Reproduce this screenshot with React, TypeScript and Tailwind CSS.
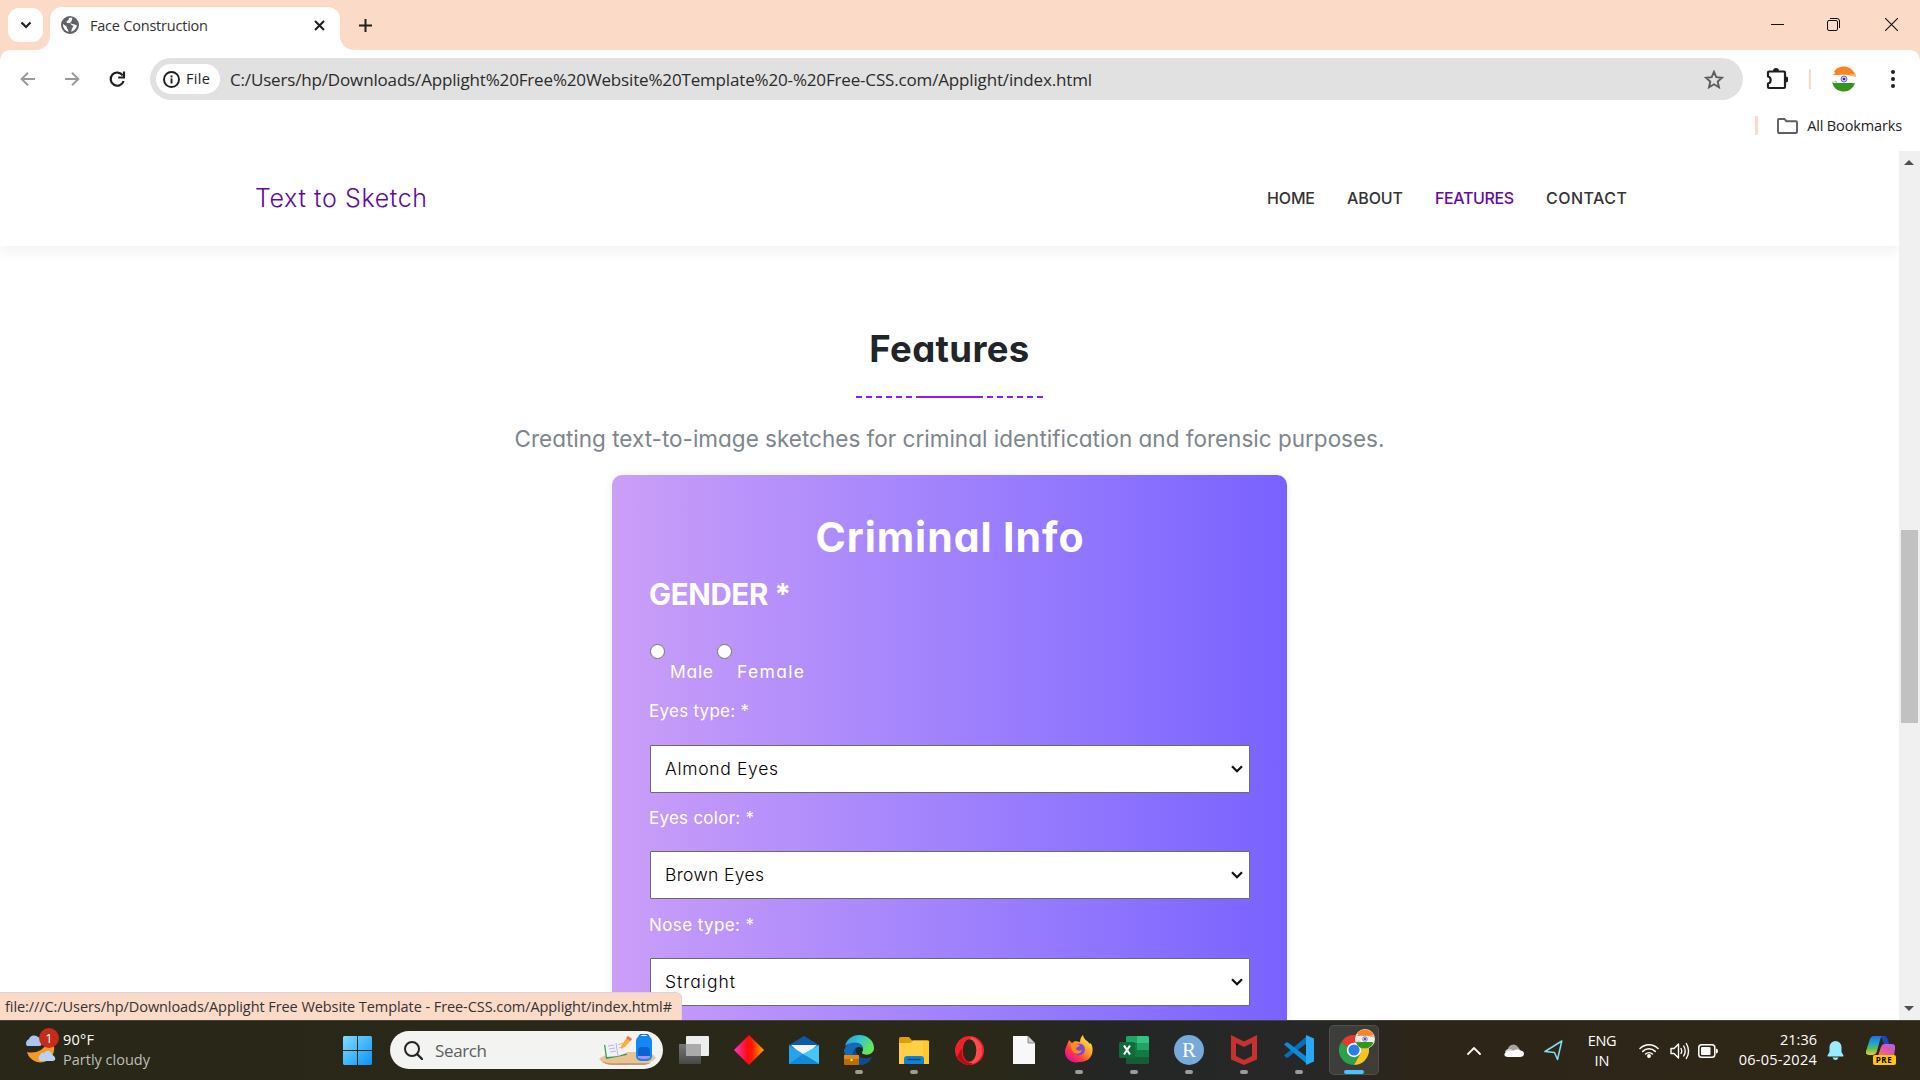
import { useLayoutEffect, useRef, useState } from "react";
import type { ReactNode } from "react";

/* A single line of text whose tracking is adjusted so that it fills a given width. */
function Fit({ w, className = "", children }: { w: number; className?: string; children: string }) {
  const ref = useRef<HTMLSpanElement>(null);
  const [spacing, setSpacing] = useState(0);
  useLayoutEffect(() => {
    if (ref.current) {
      const natural = ref.current.getBoundingClientRect().width;
      setSpacing((w - natural) / Math.max(1, children.length - 1));
    }
  }, [w, children]);
  return (
    <span ref={ref} className={`inline-block whitespace-pre ${className}`} style={{ letterSpacing: spacing }}>
      {children}
    </span>
  );
}

const UI = "font-['Open_Sans',sans-serif]";
const GEO = "font-['Inter',sans-serif] [font-feature-settings:'cv11']";

function IndiaBadge({ size }: { size: number }) {
  return (
    <svg width={size} height={size} viewBox="0 0 26 26">
      <path d="M3 6C5 2 9 .5 13 .5S21 3 23 6l2 4.500-4-.5C17 8 8 9 3 9l-1.500 0 3-2z" fill="#fb8320" />
      <path d="M18 8l7 .5-.5 2.500-3.500-1z" fill="#fbb77c" />
      <path d="M1 16c2 2 5 .5 8 1h13l2 .5C22 22 18 25.500 13 25.500S4 23 2.500 20z" fill="#36951d" />
      <path d="M.5 15.500l6 1.500-1.500-2.500-1.500 1z" fill="#9fd28c" />
      <circle cx="13" cy="13" r="3" fill="#cfd0f3" stroke="#5a5cc8" strokeWidth=".9" />
      <circle cx="13" cy="13" r="1.300" fill="#2b2ea8" />
    </svg>
  );
}

function TabStrip() {
  return (
    <div className="flex h-[50px] shrink-0 items-end bg-[#fcdac8]">
      <div className="mb-2 ml-2 flex h-[34px] w-[35px] items-center justify-center rounded-[11px] bg-white">
        <svg width="12" height="8" viewBox="0 0 12 8" fill="none" stroke="#1f1f1f" strokeWidth="2.200">
          <path d="M1.500 1.500 6 6l4.500-4.500" />
        </svg>
      </div>
      <svg width="15" height="15" viewBox="0 0 15 15" className="-ml-2">
        <path d="M15 0v15H0C9 15 15 9 15 0z" fill="#fff" />
      </svg>
      <div className="flex h-[43px] w-[290px] items-center rounded-t-[12px] bg-white pb-[7px] pl-[11px]">
        <svg width="18" height="18" viewBox="0 0 18 18">
          <circle cx="9" cy="9" r="9" fill="#5f6368" />
          <path
            d="M8 1.900c-.6 1.500-.3 2.600-1.900 3.100-1 .4-.7 1.900.4 2 1.600.1 3.100-.2 3.600 1.200.3 1.200 1.500.7 2 1.600.5 1.100-.8 2-1.300 3.100l-.6 2.900c3-.9 5.400-3.500 5.800-6.200-1.500-.4-1.700-1.300-3.200-1.300-1.300 0-1.600-.6-2.700-.9-1-.2-1.300-1.200-.3-1.500 1.200-.4.8-1.500 1.200-2.500.2-.5.400-.9.400-1.300C10.400 1.700 9 1.700 8 1.900zM2.100 7.800c-.6 3.600 1.700 6.900 5.300 8.100.1-1.300-.2-2.200-.9-2.800-1-.9-.3-2.200-1.200-2.900C4.200 9.500 3 9 2.100 7.800z"
            fill="#fff"
          />
        </svg>
        <div className={`mt-[2px] ml-[11px] flex-1 text-[14.500px] leading-5 text-[#333] ${UI}`}>
          <Fit w={118}>Face Construction</Fit>
        </div>
        <svg width="11" height="11" viewBox="0 0 11 11" stroke="#1f1f1f" strokeWidth="2" className="mr-[15px]">
          <path d="m1 1 9 9M10 1l-9 9" />
        </svg>
      </div>
      <svg width="15" height="15" viewBox="0 0 15 15">
        <path d="M0 0v15h15C6 15 0 9 0 0z" fill="#fff" />
      </svg>
      <svg width="13" height="13" viewBox="0 0 13 13" stroke="#1f1f1f" strokeWidth="2" className="mb-[18px] ml-[4px]">
        <path d="M6.500 0v13M0 6.500h13" />
      </svg>
      <div className="flex-1" />
      <div className="mb-[19px] flex items-center text-[#111]">
        <div className="mr-[43px] h-px w-[13px] bg-[#111]" />
        <svg width="13" height="13" viewBox="0 0 13 13" fill="none" stroke="#111" className="mr-[45px]">
          <rect x=".5" y="2.500" width="10" height="10" rx="1.500" />
          <path d="M3 .5h7a2.500 2.500 0 0 1 2.500 2.500v7" />
        </svg>
        <svg width="13" height="13" viewBox="0 0 13 13" stroke="#111" strokeWidth="1.100" className="mr-[22px]">
          <path d="m0 0 13 13M13 0 0 13" />
        </svg>
      </div>
    </div>
  );
}

function Toolbar() {
  return (
    <div className="shrink-0 bg-[#fcdac8]">
      <div className="flex h-[58px] items-center rounded-t-[10px] bg-white">
        <svg width="15" height="14" viewBox="0 0 15 14" fill="none" stroke="#9a9a9a" strokeWidth="1.900" className="ml-[20px]">
          <path d="M15 7H1.500M8 .8 1.600 7 8 13.200" />
        </svg>
        <svg width="15" height="14" viewBox="0 0 15 14" fill="none" stroke="#9a9a9a" strokeWidth="1.900" className="ml-[30px]">
          <path d="M0 7h13.500M7 .8 13.400 7 7 13.200" />
        </svg>
        <svg width="17" height="17" viewBox="0 0 17 17" fill="none" stroke="#1f1f1f" strokeWidth="2.200" className="ml-[29px]">
          <path d="M13.800 4.500A6.600 6.600 0 1 0 14.600 10" />
          <path d="M15 .5v6H9.200" />
        </svg>
        <div className="ml-[24px] flex h-[42px] w-[1593px] items-center rounded-full bg-[#e1e1e1] pl-[6px]">
          <div className="flex h-[30px] w-[64px] items-center rounded-full bg-white pl-[7px]">
            <svg width="17" height="17" viewBox="0 0 17 17" fill="none" stroke="#1f1f1f" strokeWidth="1.900">
              <circle cx="8.500" cy="8.500" r="7.500" />
              <path d="M8.500 7.600v4.800M8.500 4.500v2" />
            </svg>
            <div className={`ml-[6px] text-[14.500px] leading-5 text-[#1f1f1f] ${UI}`}>
              <Fit w={24}>File</Fit>
            </div>
          </div>
          <div className={`mt-[2px] ml-[10px] flex-1 text-[17px] leading-6 text-[#2b2b2b] ${UI}`}>
            <Fit w={862}>C:/Users/hp/Downloads/Applight%20Free%20Website%20Template%20-%20Free-CSS.com/Applight/index.html</Fit>
          </div>
          <svg width="20" height="19" viewBox="0 0 20 19" fill="none" stroke="#5c5c5c" strokeWidth="1.900" className="mr-[19px]">
            <path d="m10 1.800 2.300 5.400 5.800.5-4.400 3.900 1.300 5.700L10 14.300l-5 3 1.300-5.700-4.400-3.900 5.800-.5z" />
          </svg>
        </div>
        <svg width="22" height="22" viewBox="0 0 22 22" fill="none" className="ml-[23px]">
          <path
            d="M2 4.500q0-1 1-1h15q1 0 1 1V19q0 1-1 1H3q-1 0-1-1v-3.500c3.500-.5 3.500-6.500 0-7z"
            stroke="#1f1f1f"
            strokeWidth="2.200"
            strokeLinejoin="round"
          />
          <path d="M7 3a3 3 0 0 1 6 0zM19.500 8.500a3 3 0 0 1 0 6z" fill="#1f1f1f" />
        </svg>
        <div className="ml-[21px] h-5 w-[2px] bg-[#fcdac8]" />
        <div className="ml-[20px]">
          <IndiaBadge size={26} />
        </div>
        <svg width="4" height="18" viewBox="0 0 4 18" fill="#1f1f1f" className="ml-[34px]">
          <circle cx="2" cy="2" r="2" />
          <circle cx="2" cy="9" r="2" />
          <circle cx="2" cy="16" r="2" />
        </svg>
      </div>
      <div className="flex h-[43px] items-start justify-end bg-white pt-2 pr-[18px]">
        <div className="h-[19px] w-[3px] bg-[#fcdac8]" />
        <svg width="21" height="16" viewBox="0 0 21 16" fill="none" stroke="#5f5f5f" strokeWidth="1.900" className="mt-[2px] ml-[19px]">
          <path d="M1 2q0-1 1-1h5.500l2 2.200H19q1 0 1 1V14q0 1-1 1H2q-1 0-1-1z" />
        </svg>
        <div className={`ml-[9px] text-[14.500px] leading-5 text-[#222] ${UI}`}>
          <Fit w={95}>All Bookmarks</Fit>
        </div>
      </div>
    </div>
  );
}

function SiteNav() {
  return (
    <header
      className={`flex h-[95px] shrink-0 items-center bg-white pb-px pl-[255px] shadow-[0_5px_14px_rgba(0,0,0,0.06)] ${GEO}`}
    >
      <div className="w-[1012px] text-[25px] leading-9 font-light text-[#5f0a9e]">
        <Fit w={172}>Text to Sketch</Fit>
      </div>
      <nav className="flex text-[16px] leading-6 font-medium text-[#333]">
        <div className="w-[80px]">
          <Fit w={48}>HOME</Fit>
        </div>
        <div className="w-[88px]">
          <Fit w={56}>ABOUT</Fit>
        </div>
        <div className="w-[111px] text-[#6607a8]">
          <Fit w={79}>FEATURES</Fit>
        </div>
        <div>
          <Fit w={81}>CONTACT</Fit>
        </div>
      </nav>
    </header>
  );
}

function SelectBox({ value, w }: { value: string; w: number }) {
  return (
    <div className="flex h-12 items-center justify-between rounded-[1px] border border-[#6b6b6b] bg-white pr-[6px] pl-[14px]">
      <div className="text-[17.500px] leading-6 font-light text-black">
        <Fit w={w}>{value}</Fit>
      </div>
      <svg width="12" height="8" viewBox="0 0 12 8" fill="none" stroke="#111" strokeWidth="2.200">
        <path d="m1 1.300 5 5 5-5" />
      </svg>
    </div>
  );
}

function Radio({ label, w, className = "" }: { label: string; w: number; className?: string }) {
  return (
    <label className={`flex h-10 items-start ${className}`}>
      <span className="h-[15px] w-[15px] rounded-full border border-[#767676] bg-white" />
      <span className="mt-4 ml-[5px] text-[17.500px] leading-6">
        <Fit w={w}>{label}</Fit>
      </span>
    </label>
  );
}

function CriminalForm() {
  return (
    <div
      className={`h-[700px] w-[675px] shrink-0 rounded-[10px] bg-gradient-to-r from-[#cb9ef8] to-[#7961ff] pt-8 pr-[37px] pl-[38px] text-white shadow-[0_0_10px_rgba(0,0,0,0.08)] ${GEO}`}
    >
      <h1 className="h-[60px] text-center text-[41px] leading-[60px] font-bold">
        <Fit w={268}>Criminal Info</Fit>
      </h1>
      <h2 className="mt-[3px] -ml-px h-12 text-[29.500px] leading-[48px] font-bold">
        <Fit w={142}>GENDER *</Fit>
      </h2>
      <div className="mt-[26px] flex">
        <Radio label="Male" w={43} className="w-[67px]" />
        <Radio label="Female" w={67} />
      </div>
      <div className="mt-[15px] mb-[22px] -ml-px text-[17px] leading-6">
        <Fit w={100}>Eyes type: *</Fit>
      </div>
      <SelectBox value="Almond Eyes" w={113} />
      <div className="mt-[13px] mb-[21px] -ml-px text-[17px] leading-6">
        <Fit w={105}>Eyes color: *</Fit>
      </div>
      <SelectBox value="Brown Eyes" w={99} />
      <div className="mt-[14px] mb-[21px] -ml-px text-[17px] leading-6">
        <Fit w={105}>Nose type: *</Fit>
      </div>
      <SelectBox value="Straight" w={70} />
    </div>
  );
}

function Dashes() {
  return (
    <div className="flex h-[2px] gap-1">
      {[0, 1, 2, 3, 4, 5].map((i) => (
        <div key={i} className="w-[6px] bg-[#8f1bf5]" />
      ))}
    </div>
  );
}

function Features() {
  return (
    <section className={`flex flex-col items-center pt-[79px] ${GEO}`}>
      <h3 className="h-12 text-[36.500px] leading-[48px] font-bold text-[#212529]">
        <Fit w={160}>Features</Fit>
      </h3>
      <div className="mt-[23px] flex">
        <Dashes />
        <div className="mx-1 h-[2px] w-[67px] bg-[#8f1bf5]" />
        <Dashes />
      </div>
      <p className="mt-[24px] mb-[20px] text-[22.500px] leading-[33px] text-[#7d868e]">
        <Fit w={870}>Creating text-to-image sketches for criminal identification and forensic purposes.</Fit>
      </p>
      <CriminalForm />
    </section>
  );
}

function Scrollbar() {
  return (
    <div className="flex h-full w-[21px] shrink-0 flex-col items-center bg-[#f0f0f0] pr-px">
      <div className="mt-[9px] h-0 w-0 border-x-[5px] border-b-[5px] border-x-transparent border-b-[#505050]" />
      <div className="mt-[365px] h-[193px] w-[17px] bg-[#c1c1c1]" />
      <div className="mt-[283px] h-0 w-0 border-x-[5px] border-t-[5px] border-x-transparent border-t-[#505050]" />
    </div>
  );
}

function Slot({ children, running = false, active = false }: { children: ReactNode; running?: boolean; active?: boolean }) {
  return (
    <div className="flex w-[55px] justify-center">
      <div
        className={`flex h-[50px] w-[50px] flex-col items-center rounded-[5px] ${
          active ? "border border-white/10 bg-white/10 pt-[8px]" : "pt-[9px]"
        }`}
      >
        <div className="flex h-8 items-center">{children}</div>
        {running && <div className="mt-[4px] h-1 w-2 rounded-full bg-[#9b9b99]" />}
        {active && <div className="mt-[4px] h-1 w-5 shrink-0 rounded-full bg-[#4cc2ff]" />}
      </div>
    </div>
  );
}

function TaskIcons() {
  return (
    <div className="flex">
      <Slot>
        <svg width="30" height="28" viewBox="0 0 30 28">
          <defs>
            <linearGradient id="tv" x2="0" y2="1">
              <stop stopColor="#777" />
              <stop offset="1" stopColor="#484848" />
            </linearGradient>
          </defs>
          <rect y="8" width="22" height="20" rx="1" fill="url(#tv)" />
          <rect x="7" width="23" height="20" rx="1" fill="#ededed" />
          <path d="M7 8h15v12H7z" fill="#aaa" />
        </svg>
      </Slot>
      <Slot>
        <svg width="30" height="30" viewBox="0 0 30 30">
          <defs>
            <linearGradient id="dm">
              <stop stopColor="#ff35c8" />
              <stop offset=".45" stopColor="#ff0a10" />
              <stop offset=".6" stopColor="#ff1800" />
              <stop offset="1" stopColor="#ffae00" />
            </linearGradient>
          </defs>
          <path d="M15 0 30 15 15 30 0 15z" fill="url(#dm)" />
        </svg>
      </Slot>
      <Slot>
        <svg width="30" height="28" viewBox="0 0 30 28">
          <path d="M0 9 15 0l15 9v5H0z" fill="#0c59a8" />
          <path d="M2 9h26L15 21z" fill="#f3f3f3" />
          <path d="M0 9v19h30z" fill="#26a4e9" />
          <path d="M30 9v19L14 18z" fill="#45c7f5" />
          <path d="M0 28 14 18l16 10z" fill="#1588d8" />
        </svg>
      </Slot>
      <Slot running>
        <svg width="30" height="30" viewBox="0 0 30 30">
          <defs>
            <linearGradient id="eg" x2="1" y2=".5">
              <stop stopColor="#2695df" />
              <stop offset=".5" stopColor="#35c6d4" />
              <stop offset="1" stopColor="#67e850" />
            </linearGradient>
          </defs>
          <path d="M0 15a15 15 0 0 1 5-7C13 5 20 10 18 15c-5-5-8 3-3 8 4 3 9 3 13-1-3 6-8 8-13 8S0 25 0 15z" fill="#1469bd" />
          <path d="M12 12c-1 8 5 14 16 10-4 6-8 8-13 8-7-2-9-12-3-18z" fill="#0b4c94" />
          <path d="M1 11C3 4 8 0 15 0c9 0 15 6 15 13 0 5-5 8-11 6-2-1-1-2 0-4 1-6-8-11-18-4z" fill="url(#eg)" />
          <circle cx="15" cy="15.500" r="3.400" fill="#20241c" />
          <rect y="20" width="15" height="10" rx="1" fill="#bd6b06" />
          <path d="M0 20h15v4H0z" fill="#e08b16" />
          <circle cx="7.500" cy="25" r="1.200" fill="#ffdf55" />
        </svg>
      </Slot>
      <Slot running>
        <svg width="30" height="27" viewBox="0 0 30 27">
          <path d="M0 1.500Q0 0 1.500 0H10l3 3.500h15q2 0 2 2V12H0z" fill="#dfa007" />
          <path d="M0 6h11l3-2.500h15q1 0 1 1V27H0z" fill="#ffcf45" />
          <path d="M24 4h5q1 0 1 1v22h-6z" fill="#ffb900" opacity=".35" />
          <path d="M5 27v-5q0-3 3-3h14q3 0 3 3v5z" fill="#1380d2" />
          <path d="M8.500 22.500h13" stroke="#0a4f8f" strokeWidth="1.500" />
        </svg>
      </Slot>
      <Slot>
        <svg width="29" height="29" viewBox="0 0 29 29">
          <ellipse cx="14.500" cy="14.500" rx="14.500" ry="14.500" fill="#f0202c" />
          <path d="M17 1a14 14 0 0 1 0 27c-5-1-3-4 0-4 5-4 5-15 0-19-3-1-3-3 0-4z" fill="#ff4b4b" />
          <path d="M2 21c4 6 8 8 13 8l3-2C9 28 6 20 7 12z" fill="#bd0913" />
          <ellipse cx="14.500" cy="14.500" rx="6.800" ry="11.300" fill="#292819" />
        </svg>
      </Slot>
      <Slot>
        <svg width="22" height="28" viewBox="0 0 22 28">
          <path d="M0 0h15l7 7v21H0z" fill="#f8f8f8" />
          <path d="M15 0v7h7z" fill="#cfcfcf" stroke="#777" strokeWidth=".8" />
        </svg>
      </Slot>
      <Slot running>
        <svg width="30" height="30" viewBox="0 0 30 30">
          <defs>
            <linearGradient id="ff" x1=".9" y1=".1" x2=".2" y2=".9">
              <stop stopColor="#fff14a" />
              <stop offset=".45" stopColor="#ff9426" />
              <stop offset=".75" stopColor="#ff3b3e" />
              <stop offset="1" stopColor="#e5138f" />
            </linearGradient>
          </defs>
          <path d="M3 10 5 5l3 3 3-2 5 1c0-3 1-5 3-7 1 5 4 5 7 9 1-1 0-2 0-2 3 4 3 8 2 12-2 6-7 8-13 8C7 29 1 23 1 17c0-3 1-5 2-7z" fill="url(#ff)" />
          <circle cx="15" cy="14.500" r="6" fill="#7b49d8" />
          <path d="M7 9c4-1 5 0 9 1-1 2-4 2-4 4 1 2 4 2 6 1-1 4-6 5-9 2-2-2-2-5-2-8z" fill="#ff8a24" />
        </svg>
      </Slot>
      <Slot running>
        <svg width="30" height="28" viewBox="0 0 30 28">
          <rect x="7" width="23" height="28" rx="1.500" fill="#185c37" />
          <path d="M7 7h11v14H7z" fill="#107c41" />
          <path d="M7 1.500Q7 0 8.500 0H18v7H7z" fill="#21a366" />
          <path d="M18 0h10.500Q30 0 30 1.500V7H18z" fill="#33c481" />
          <path d="M18 7h12v7H18z" fill="#21a366" />
          <path d="M18 14h12v7H18z" fill="#107c41" />
          <rect y="6" width="16" height="16" rx="1.500" fill="#0f6b39" />
          <path d="m5 9.500 6 9M11 9.500l-6 9" stroke="#fff" strokeWidth="2.200" />
        </svg>
      </Slot>
      <Slot running>
        <div className="flex h-[30px] w-[30px] items-center justify-center rounded-full bg-[#75aadb] font-['Liberation_Serif',serif] text-[21px] leading-none text-white">
          R
        </div>
      </Slot>
      <Slot running>
        <svg width="26" height="30" viewBox="0 0 26 30">
          <path
            fillRule="evenodd"
            d="M0 0 13 6.500 26 0v24.500L13 30 0 24.500zM5 8v13l8 4 8-4V8l-8 4z"
            fill="#c8312f"
          />
        </svg>
      </Slot>
      <Slot running>
        <svg width="30" height="30" viewBox="0 0 30 30">
          <path d="m0 20.500 2 2h2L23 8V1z" fill="#0b6db8" />
          <path d="m0 9.500 2-2L4 7.500l19 14.500V29z" fill="#0f8ad6" />
          <path d="m22 0 8 3.500v23L22 30z" fill="#29a8f5" />
        </svg>
      </Slot>
      <Slot active>
        <div className="relative">
          <svg width="30" height="30" viewBox="0 0 30 30">
            <path d="M15 15 2 7.500a15 15 0 0 1 26 0z" fill="#e33b2e" />
            <path d="M15 15 2 7.500A15 15 0 0 0 15 30l6.500-11.500z" fill="#2ba14b" />
            <path d="M15 7.500h13A15 15 0 0 1 15 30l6.500-11.500z" fill="#fcc31e" />
            <circle cx="15" cy="15" r="7.200" fill="#fff" />
            <circle cx="15" cy="15" r="5.600" fill="#2b7de9" />
          </svg>
          <div className="absolute -top-[6px] left-[16px] rounded-full bg-[#eee]">
            <IndiaBadge size={20} />
          </div>
        </div>
      </Slot>
    </div>
  );
}

function Tray() {
  return (
    <div className={`flex items-center text-[14.500px] leading-5 text-white ${UI}`}>
      <div className="flex w-[40px] justify-center">
        <svg width="14" height="8" viewBox="0 0 14 8" fill="none" stroke="#fff" strokeWidth="1.800" strokeLinecap="round">
          <path d="m1 7 6-6 6 6" />
        </svg>
      </div>
      <div className="flex w-[40px] justify-center">
        <svg width="20" height="13" viewBox="0 0 20 13">
          <path d="M4 7a5.500 5.500 0 0 1 10-4l3 4z" fill="#a6a49f" />
          <path d="M1 8a4 4 0 0 1 5-3c2 0 3 2 5 2z" fill="#d0cfcd" />
          <path d="M1 9c2-3 6-2 8-2 2-2 6-2 7-.5 2 0 4 1 4 3.200S18 13 16 13H4C0 13 0 10 1 9z" fill="#fff" />
        </svg>
      </div>
      <div className="flex w-[38px] justify-center">
        <svg width="19" height="21" viewBox="0 0 19 21" fill="none" stroke="#86dcf2" strokeWidth="1.500" strokeLinejoin="round">
          <path d="M17.800 1 1 11.500l9.500 1 3 7z" />
        </svg>
      </div>
      <div className="flex w-[60px] flex-col items-center">
        <Fit w={29}>ENG</Fit>
        <Fit w={15}>IN</Fit>
      </div>
      <div className="flex w-[33px] justify-center">
        <svg width="20" height="15" viewBox="0 0 20 15" fill="none" stroke="#fff" strokeWidth="1.500" strokeLinecap="round">
          <path d="M1 5.500a12.500 12.500 0 0 1 18 0M3.800 8.400a8.700 8.700 0 0 1 12.400 0M6.600 11a5 5 0 0 1 6.800 0" />
          <circle cx="10" cy="13" r="1.200" fill="#fff" />
        </svg>
      </div>
      <div className="flex w-[29px] justify-center">
        <svg width="20" height="18" viewBox="0 0 20 18" fill="none" stroke="#fff" strokeWidth="1.400" strokeLinecap="round" strokeLinejoin="round">
          <path d="M1 6.500h3L8.500 2v14L4 11.500H1zM11 6.500q1.500 2.500 0 5M13.700 4q3 5 0 10M16.300 1.500q4.500 7.500 0 15" />
        </svg>
      </div>
      <div className="flex w-[28px] justify-center">
        <svg width="20" height="14" viewBox="0 0 20 14" fill="none">
          <rect x=".8" y=".8" width="16" height="12.400" rx="2.800" stroke="#fff" strokeWidth="1.500" />
          <rect x="3" y="3" width="9.500" height="8" rx="1" fill="#fff" />
          <path d="M18 4.500q2 0 2 2.500t-2 2.500z" fill="#fff" />
        </svg>
      </div>
      <div className="flex w-[95px] flex-col items-end pb-[2px]">
        <Fit w={37}>21:36</Fit>
        <Fit w={78}>06-05-2024</Fit>
      </div>
      <div className="flex w-[37px] justify-center">
        <svg width="17" height="19" viewBox="0 0 17 19" fill="#99ebff">
          <path d="M8.500 0a6 6 0 0 1 6 6v5l2 3.500q.3 1-.7 1H1.200q-1 0-.7-1L2.500 11V6a6 6 0 0 1 6-6zM5.500 16.500h6q-1 2.500-3 2.500t-3-2.500z" />
        </svg>
      </div>
      <div className="flex w-[52px] justify-center">
        <div className="relative h-[29px] w-[29px]">
          <svg width="29" height="20" viewBox="0 0 29 20">
            <defs>
              <linearGradient id="cpa" x2="0" y2="1">
                <stop stopColor="#2b6be0" />
                <stop offset=".35" stopColor="#18a2d8" />
                <stop offset=".65" stopColor="#53bd63" />
                <stop offset="1" stopColor="#f5cb1b" />
              </linearGradient>
              <linearGradient id="cpb" x1="1" y1="0" x2="0" y2="1">
                <stop stopColor="#9a6cf5" />
                <stop offset=".5" stopColor="#e254a8" />
                <stop offset="1" stopColor="#ff7657" />
              </linearGradient>
            </defs>
            <path d="M15 0h3q3 0 4 4l1 4h-5z" fill="#1b47c0" />
            <path d="M8 0h9q-2 0-3 4l-3 11q-1 4-5 4H3q-4 0-3-4L4 3q1-3 4-3z" fill="url(#cpa)" />
            <path d="M18 8h8q4 0 3 5l-1 7H12l3-9q1-3 3-3z" fill="url(#cpb)" />
          </svg>
          <div className="absolute bottom-0 left-[7px] flex h-[10px] w-[23px] items-center justify-center rounded-[2px] bg-[#ffc80a] text-[8px] leading-none font-bold tracking-[0.5px] text-black">
            PRE
          </div>
        </div>
      </div>
      <div className="w-[14px]" />
    </div>
  );
}

function Taskbar() {
  return (
    <footer className="flex h-[60px] shrink-0 items-stretch border-t border-[#45443a] bg-[linear-gradient(90deg,#292718_0%,#292819_52%,#242626_58%,#272726_70%,#2d2517_74%,#2e2617_100%)]">
      <div className={`flex w-[343px] pl-[25px] text-[14.500px] leading-5 ${UI}`}>
        <div className="relative mt-[8px] h-[35px] w-[38px]">
          <svg width="31" height="34" viewBox="0 0 31 34">
            <path d="M2 17a4.500 4.500 0 0 1 2-7 5.500 5.500 0 0 1 9-2q3 1 3 4 2 5-2 5z" fill="#a9c5f2" />
            <path d="M27 12a14 14 0 0 1-8 21A14 14 0 0 1 2 23q14 3 22-11z" fill="#f59a20" />
            <path d="M15 32q-3-3 0-6 1-3 4-2 3-4 7-1 1 3 3 4 3 4-1 5z" fill="#b9d0f7" />
          </svg>
          <div className="absolute -top-[1px] left-[14px] flex h-5 w-5 items-center justify-center rounded-full bg-[#c42b1c] text-[13px] text-white">
            1
          </div>
        </div>
        <div className="flex flex-col pt-[9px]">
          <span className="h-5 text-white">
            <Fit w={31}>90°F</Fit>
          </span>
          <span className="h-5 text-[#bfbeb9]">
            <Fit w={87}>Partly cloudy</Fit>
          </span>
        </div>
      </div>
      <svg width="29" height="29" viewBox="0 0 29 29" className="mt-[15px]">
        <defs>
          <linearGradient id="wn" x2="1" y2="1">
            <stop stopColor="#7fdcff" />
            <stop offset="1" stopColor="#0a93f5" />
          </linearGradient>
        </defs>
        <path d="M1 0h13v14H0V1zM15 0h13l1 1v13H15zM0 15h14v14H1l-1-1zM15 15h14v13l-1 1H15z" fill="url(#wn)" />
      </svg>
      <div className="mt-[10px] ml-[18px] flex h-[38px] w-[273px] items-center rounded-full bg-[#f3f3f1] pl-[14px]">
        <svg width="19" height="19" viewBox="0 0 19 19" fill="none" stroke="#252525" strokeWidth="2" strokeLinecap="round">
          <circle cx="8" cy="8" r="7" />
          <path d="m13 13 5 5" strokeWidth="2.400" />
        </svg>
        <div className={`mt-[2px] ml-[12px] flex-1 text-[17px] leading-6 text-[#5d5d5d] ${UI}`}>
          <Fit w={52}>Search</Fit>
        </div>
        <svg width="58" height="32" viewBox="0 0 58 32" className="mr-[6px]">
          <path d="M0 25q6-5 18-7h24q12 0 15 6-5 5-12 7H14Q4 29 0 25z" fill="#e9c394" />
          <path d="M2 27q7 3 18 2h32l-6 2H14Q6 31 2 27z" fill="#c79b6d" />
          <path d="m5 11 2 14 21-4-3-13z" fill="#3f9a4c" />
          <path d="m6 9 8-1 3 1 8-4 3 14-9 3-11 1z" fill="#f2f1fb" />
          <path d="m17 9 2 13M9 12l6-1m-5 4 6-1m-5 4 6-1m2-6 5-2m-4 5 5-2" stroke="#b9b6dd" strokeWidth="1" />
          <path d="M22 12 29 2l4 3-7 8-4 2z" fill="#ffae2b" />
          <path d="m27 4 2-2 4 3-2 2z" fill="#ef6a6a" />
          <path d="M40 4q0-4 5-4t5 4" fill="none" stroke="#0a6ad8" strokeWidth="1.500" />
          <rect x="37" y="2" width="16" height="25" rx="5" fill="#1287f5" />
          <rect x="39" y="13" width="12" height="11" rx="4" fill="#0765d2" />
          <path d="M39 22h12v2q-6 2-12 0z" fill="#b78cf0" />
        </svg>
      </div>
      <div className="ml-[3.500px] pt-[4px]">
        <TaskIcons />
      </div>
      <div className="flex-1" />
      <Tray />
    </footer>
  );
}

export default function App() {
  return (
    <div className="flex h-[1080px] w-[1920px] flex-col overflow-hidden bg-white">
      <TabStrip />
      <Toolbar />
      <div className="relative flex h-[869px] shrink-0 overflow-hidden">
        <div className="h-full flex-1 overflow-hidden">
          <SiteNav />
          <Features />
        </div>
        <Scrollbar />
        <div
          className={`absolute bottom-0 left-0 h-7 w-[682px] rounded-tr-[6px] border-t border-r border-[#d9d5d8] bg-[#fcdac8] pl-[5px] text-[14.500px] leading-[27px] text-[#333] ${UI}`}
        >
          <Fit w={667}>file:///C:/Users/hp/Downloads/Applight Free Website Template - Free-CSS.com/Applight/index.html#</Fit>
        </div>
      </div>
      <Taskbar />
    </div>
  );
}
